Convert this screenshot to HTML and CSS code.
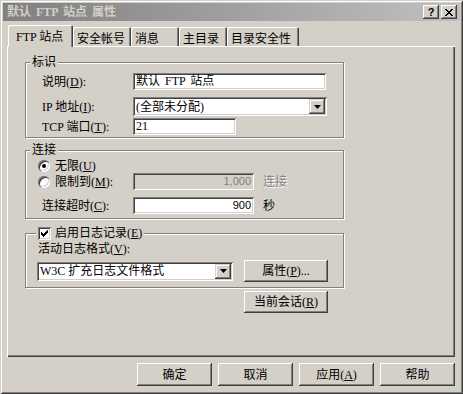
FILE: index.html
```html
<!DOCTYPE html>
<html lang="zh-CN">

<head>
    <meta charset="UTF-8">
    <title>默认 FTP 站点 属性</title>
    <link rel="stylesheet" href="styles.css">
</head>

<body>
    <div class="window">
        <div class="titlebar">
            <span class="title">默认 FTP 站点 属性</span>
            <div class="caption-btns">
                <span class="cap-btn cap-help">?</span>
                <span class="cap-btn">
                    <svg width="8" height="7" viewBox="0 0 8 7">
                        <path d="M0 0h2v1h1v1h2v-1h1v-1h2v1h-1v1h-1v1h-1v1h1v1h1v1h1v1h-2v-1h-1v-1h-2v1h-1v1h-2v-1h1v-1h1v-1h1v-1h-1v-1h-1v-1h-1z" fill="#000"/>
                    </svg>
                </span>
            </div>
        </div>

        <div class="tabs">
            <div class="tab active tab-ftp">FTP 站点</div>
            <div class="tab tab-acct">安全帐号</div>
            <div class="tab tab-msg">消息</div>
            <div class="tab tab-home">主目录</div>
            <div class="tab tab-sec">目录安全性</div>
        </div>

        <div class="panel">
            <fieldset class="group">
                <legend>标识</legend>
                <div class="group-body body-id">
                    <div class="row h17 mb7">
                        <span class="lbl">说明(<u>D</u>):</span>
                        <div class="edit w193">默认 FTP 站点</div>
                    </div>
                    <div class="row h19 mb2">
                        <span class="lbl">IP 地址(<u>I</u>):</span>
                        <div class="combo w194">
                            <span class="combo-text">(全部未分配)</span>
                            <span class="combo-btn">
                                <svg width="7" height="4" viewBox="0 0 7 4"><path d="M0 0h7l-3.5 4z" fill="#000"/></svg>
                            </span>
                        </div>
                    </div>
                    <div class="row h17">
                        <span class="lbl">TCP 端口(<u>T</u>):</span>
                        <div class="edit w103">21</div>
                    </div>
                </div>
            </fieldset>

            <fieldset class="group group-conn">
                <legend>连接</legend>
                <div class="group-body body-conn">
                    <div class="row h15">
                        <span class="radio checked"></span>
                        <span class="opt">无限(<u>U</u>)</span>
                    </div>
                    <div class="row h17 mb7">
                        <div class="opt-cell">
                            <span class="radio"></span>
                            <span class="opt">限制到(<u>M</u>):</span>
                        </div>
                        <div class="edit w121 num disabled">1,000</div>
                        <span class="unit disabled-text">连接</span>
                    </div>
                    <div class="row h17">
                        <span class="lbl indent">连接超时(<u>C</u>):</span>
                        <div class="edit w121 num">900</div>
                        <span class="unit">秒</span>
                    </div>
                </div>
            </fieldset>

            <fieldset class="group group-log">
                <legend class="check-legend">
                    <span class="checkbox">
                        <svg width="7" height="7" viewBox="0 0 7 7"><path d="M0 2h1v1h1v1h1v-1h1v-1h1v-1h1v-1h1v3h-1v1h-1v1h-1v1h-1v1h-1v-1h-1v-1h-1z" fill="#000"/></svg>
                    </span>
                    <span>启用日志记录(<u>E</u>)</span>
                </legend>
                <div class="group-body body-log">
                    <div class="row h16">
                        <span class="lbl-plain">活动日志格式(<u>V</u>):</span>
                    </div>
                    <div class="row h22 mt3">
                        <div class="combo w196">
                            <span class="combo-text">W3C 扩充日志文件格式</span>
                            <span class="combo-btn">
                                <svg width="7" height="4" viewBox="0 0 7 4"><path d="M0 0h7l-3.5 4z" fill="#000"/></svg>
                            </span>
                        </div>
                        <button class="btn btn-side">属性(<u>P</u>)...</button>
                    </div>
                </div>
            </fieldset>

            <button class="btn btn-side btn-session">当前会话(<u>R</u>)</button>
        </div>

        <div class="dlg-buttons">
            <button class="btn btn-dlg">确定</button>
            <button class="btn btn-dlg">取消</button>
            <button class="btn btn-dlg">应用(<u>A</u>)</button>
            <button class="btn btn-dlg">帮助</button>
        </div>
    </div>
</body>

</html>
```

FILE: styles.css
```css
* {
    box-sizing: border-box;
}

body {
    margin: 0;
    font-family: "Liberation Serif", "Noto Sans CJK SC", sans-serif;
    font-size: 12px;
    line-height: 14px;
    color: #000;
    background: #d4d0c8;
}

.window {
    width: 463px;
    height: 394px;
    padding: 3px;
    display: flex;
    flex-direction: column;
    background: #d4d0c8;
    box-shadow: inset 1px 1px #d4d0c8, inset -1px -1px #404040, inset 2px 2px #fff, inset -2px -2px #808080;
}

/* title bar */
.titlebar {
    height: 18px;
    padding: 2px 3px 0 3px;
    display: flex;
    justify-content: space-between;
    align-items: flex-start;
    background: linear-gradient(to right, #808080, #c0c0c0);
}

.title {
    color: #d4d0c8;
    font-weight: bold;
    padding-left: 1px;
    word-spacing: 2px;
}

.caption-btns {
    display: flex;
    gap: 2px;
}

.cap-btn {
    width: 16px;
    height: 14px;
    display: flex;
    align-items: center;
    justify-content: center;
    background: #d4d0c8;
    box-shadow: inset -1px -1px #404040, inset 1px 1px #fff, inset -2px -2px #808080;
}

.cap-help {
    font-family: "Liberation Sans", sans-serif;
    font-weight: bold;
    font-size: 11px;
}

/* tabs */
.tabs {
    height: 21px;
    margin-top: 4px;
    padding-left: 5px;
    display: flex;
    align-items: flex-end;
}

.tab {
    height: 19px;
    padding: 5px 0 0 4px;
    white-space: nowrap;
    background: #d4d0c8;
    border-radius: 2px 2px 0 0;
    box-shadow: inset 1px 1px #fff, inset -1px 0 #404040, inset -2px 0 #808080;
}

.tab.active {
    height: 22px;
    margin-bottom: -1px;
    padding: 5px 0 0 8px;
    position: relative;
    z-index: 1;
}

.tab-ftp { width: 65px; }
.tab-acct { width: 58px; }
.tab-msg { width: 48px; }
.tab-home { width: 48px; }
.tab-sec { width: 72px; }

.panel {
    width: 448px;
    height: 311px;
    margin-left: 4px;
    padding: 9px 0 0 18px;
    box-shadow: inset 1px 1px #fff, inset -1px -1px #404040, inset -2px -2px #808080;
}

/* group boxes */
.group {
    width: 319px;
    margin: 0;
    padding: 0;
    min-inline-size: 0;
    border: 1px solid #808080;
    box-shadow: inset 1px 1px #fff, 1px 1px #fff;
}

.group legend {
    margin-left: 4px;
    padding: 0 2px;
    line-height: 14px;
    background: #d4d0c8;
}

.group-conn {
    margin-top: 5px;
}

.group-log {
    margin-top: 7px;
}

.group .check-legend {
    margin-left: 10px;
    display: flex;
    align-items: center;
    gap: 4px;
}

.body-id { padding: 4px 0 2px 16px; }
.body-conn { padding: 1px 0 4px 12px; }
.body-log { padding: 1px 0 5px 11px; }

.row {
    display: flex;
    align-items: center;
}

.h15 { height: 15px; }
.h16 { height: 16px; }
.h17 { height: 17px; }
.h19 { height: 19px; }
.h22 { height: 22px; }
.mb2 { margin-bottom: 2px; }
.mb7 { margin-bottom: 7px; }
.mt3 { margin-top: 3px; }

.lbl {
    width: 91px;
    white-space: nowrap;
}

.lbl.indent {
    margin-left: 4px;
}

.lbl-plain {
    margin-left: 1px;
}

.opt-cell {
    width: 95px;
    display: flex;
    align-items: center;
}

.opt {
    margin-left: 5px;
    white-space: nowrap;
}

.unit {
    margin-left: 9px;
}

.disabled-text {
    color: #808080;
    text-shadow: 1px 1px #fff;
}

/* controls */
.edit {
    height: 17px;
    padding: 2px 3px;
    line-height: 13px;
    white-space: nowrap;
    background: #fff;
    word-spacing: 2px;
    box-shadow: inset 1px 1px #808080, inset -1px -1px #fff, inset 2px 2px #404040, inset -2px -2px #d4d0c8;
}

.edit.num {
    text-align: right;
    font-family: "Liberation Sans", sans-serif;
    font-size: 11px;
}

.edit.disabled {
    background: #d4d0c8;
    color: #808080;
}

.w103 { width: 103px; }
.w121 { width: 121px; }
.w193 { width: 193px; }
.w194 { width: 194px; }
.w196 { width: 196px; }

.combo {
    height: 19px;
    padding: 2px;
    display: flex;
    align-items: center;
    background: #fff;
    box-shadow: inset 1px 1px #808080, inset -1px -1px #fff, inset 2px 2px #404040, inset -2px -2px #d4d0c8;
}

.combo-text {
    flex: 1;
    padding-left: 1px;
    white-space: nowrap;
}

.combo-btn {
    width: 16px;
    height: 15px;
    display: flex;
    align-items: center;
    justify-content: center;
    background: #d4d0c8;
    box-shadow: inset -1px -1px #404040, inset 1px 1px #d4d0c8, inset -2px -2px #808080, inset 2px 2px #fff;
}

.radio {
    width: 12px;
    height: 12px;
    flex: none;
    border-radius: 50%;
    background: #fff;
    box-shadow: inset 1px 1px #808080, inset 2px 2px #404040, inset -1px -1px #fff, inset -2px -2px #d4d0c8;
    display: flex;
    align-items: center;
    justify-content: center;
}

.radio.checked::after {
    content: "";
    width: 4px;
    height: 4px;
    border-radius: 50%;
    background: #000;
}

.checkbox {
    width: 13px;
    height: 13px;
    display: flex;
    align-items: center;
    justify-content: center;
    background: #fff;
    box-shadow: inset 1px 1px #808080, inset -1px -1px #fff, inset 2px 2px #404040, inset -2px -2px #d4d0c8;
}

.btn {
    margin: 0;
    padding: 0;
    border: none;
    font: inherit;
    color: #000;
    background: #d4d0c8;
    box-shadow: inset -1px -1px #404040, inset 1px 1px #fff, inset -2px -2px #808080, inset 2px 2px #d4d0c8;
}

.btn-side {
    width: 84px;
    height: 22px;
    margin-left: 11px;
}

.btn-session {
    display: block;
    margin: 3px 0 0 219px;
}

.dlg-buttons {
    margin-top: 6px;
    padding-right: 5px;
    display: flex;
    justify-content: flex-end;
    gap: 6px;
}

.btn-dlg {
    width: 75px;
    height: 23px;
}
```
